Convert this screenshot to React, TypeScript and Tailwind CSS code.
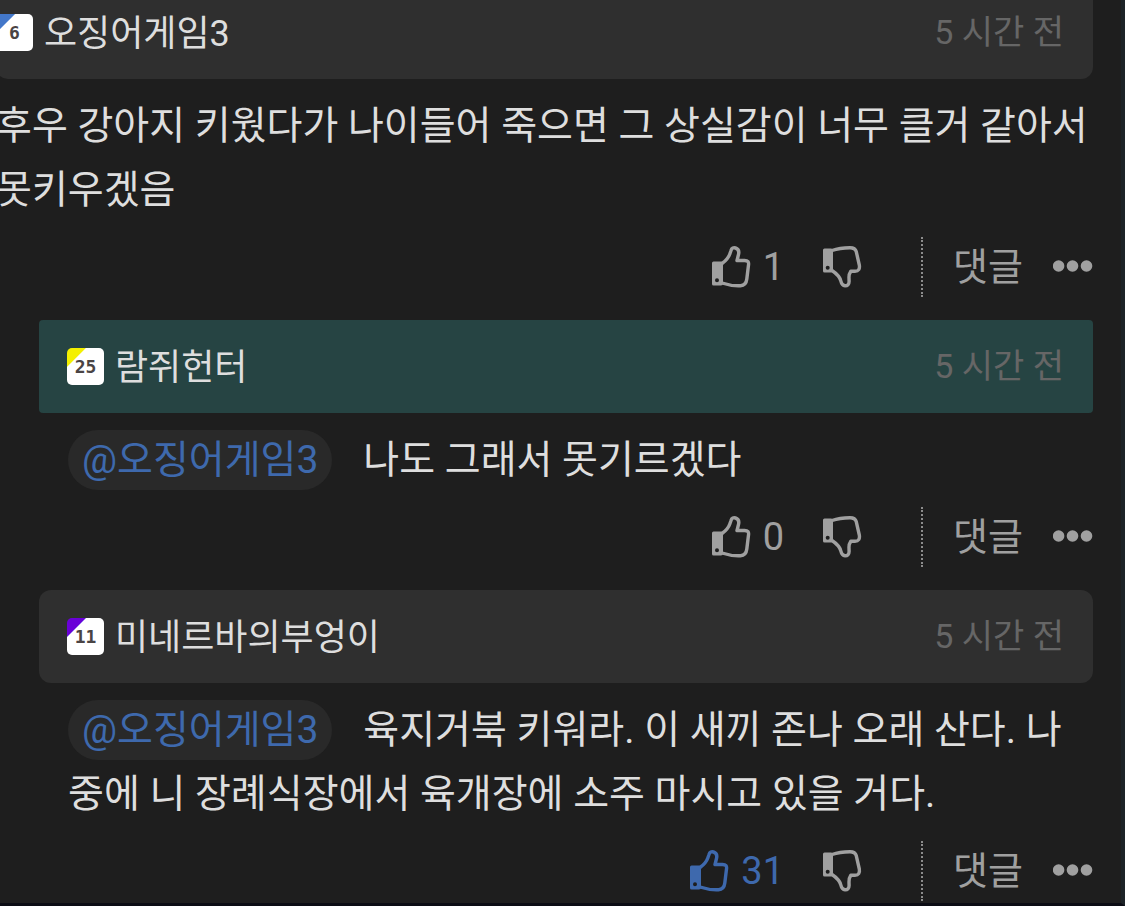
import type { ReactNode } from "react";
import clsx from "clsx";

function ThumbUp() {
  return (
    <svg className="h-[42px] w-10" viewBox="0 1 40 42" fill="none" aria-hidden="true">
      <path
        fill="currentColor"
        fillRule="evenodd"
        d="M2.500 16.500H10Q12 16.500 12 18.500V38.500Q12 40.500 10 40.500H2.500Q1 40.500 1 39V18Q1 16.500 2.500 16.500ZM6 33.200A2 2 0 1 0 6 37.200A2 2 0 1 0 6 33.200Z"
      />
      <path
        stroke="currentColor"
        strokeWidth="3.4"
        strokeLinejoin="round"
        d="M11 18.500C14.500 16 17.500 12.800 18.800 9L20 5.500C20.700 3 22.500 2.400 24.500 3C27.300 3.900 28.300 6.300 27.500 9.500L26 15.500H33.500C37 15.500 38 17 37.500 20L35.800 34C35.300 38.500 33.500 40.500 29.500 40.700C23.500 41 17 40 11 38"
      />
    </svg>
  );
}

function ThumbDown() {
  return (
    <svg className="h-[42px] w-10" viewBox="0 1 40 42" fill="none" aria-hidden="true">
      <path
        fill="currentColor"
        fillRule="evenodd"
        d="M2.500 3.500H9Q11 3.500 11 5.500V25.500Q11 27.500 9 27.500H2.500Q1 27.500 1 26V5Q1 3.500 2.500 3.500ZM5.700 20.700A2 2 0 1 0 5.700 24.700A2 2 0 1 0 5.700 20.700Z"
      />
      <path
        stroke="currentColor"
        strokeWidth="3.4"
        strokeLinejoin="round"
        d="M10 5.500C16 3.300 22 2.700 28 2.700C32 2.700 33.500 3.800 34.300 6.800L37.300 20C38 24 36.500 26.300 33 26.300H28.800C27.300 28.500 26.800 30 27 33L27.100 36.500C27.100 39.300 25.500 40.800 23 40.700C20.500 40.600 19.500 39 19 36.500C18 31.500 14.500 28.500 10 25.500"
      />
    </svg>
  );
}

function Dots() {
  return (
    <svg className="h-3.5 w-10" viewBox="0 0 40 14" fill="currentColor" aria-hidden="true">
      <circle cx="5.600" cy="6" r="5.800" />
      <circle cx="19.500" cy="6" r="5.800" />
      <circle cx="33.500" cy="6" r="5.800" />
    </svg>
  );
}

function LevelBadge({ level, corner }: { level: number; corner: string }) {
  return (
    <span
      className={clsx(
        "flex size-[37px] shrink-0 items-center justify-center rounded-[5px] bg-linear-135 from-[13px] to-white to-[14px] font-['DejaVu_Sans_Mono'] text-lg font-bold text-[#4a4444]",
        corner
      )}
    >
      {level}
    </span>
  );
}

function Mention({ name }: { name: string }) {
  return (
    <a
      href="#"
      className="mr-[31px] rounded-full bg-[#292929] px-3.5 py-[7px] text-[#3e69ad]"
    >
      {`@${name}`}
    </a>
  );
}

type CommentProps = {
  author: string;
  level: number;
  corner: string;
  likes: number;
  liked?: boolean;
  reply?: boolean;
  highlight?: boolean;
  children: ReactNode;
};

function Comment({
  author,
  level,
  corner,
  likes,
  liked,
  reply,
  highlight,
  children,
}: CommentProps) {
  return (
    <article className={reply ? "ml-[39px]" : "-ml-1"}>
      <header
        className={clsx(
          "flex h-[93px] items-center gap-[11px] pr-[29px]",
          reply && "pl-7",
          highlight ? "rounded-sm bg-[#264443]" : "rounded-xl bg-[#2f2f2f]"
        )}
      >
        <LevelBadge level={level} corner={corner} />
        <h2 className="pt-[3px] text-4xl text-[#dedede]">{author}</h2>
        <time className="ml-auto text-[34px] text-[#666666]">5 시간 전</time>
      </header>
      <p
        className={clsx(
          "pt-[15px] text-[39px] leading-[64px] text-[#dedede]",
          reply && "pl-[29px]"
        )}
      >
        {children}
      </p>
      <div className="mt-[15px] flex h-[60px] items-center justify-end text-[38px] text-[#a0a0a0]">
        <button
          aria-label="좋아요"
          className={clsx("flex items-center gap-3", liked && "text-[#3e69ad]")}
        >
          <ThumbUp />
          {likes}
        </button>
        <button aria-label="싫어요" className="ml-[38px]">
          <ThumbDown />
        </button>
        <div className="ml-[59px] h-full border-l-2 border-dotted border-[#8c8c8c]" />
        <button className="ml-[30px]">댓글</button>
        <button aria-label="더보기" className="ml-[30px]">
          <Dots />
        </button>
      </div>
    </article>
  );
}

export default function App() {
  return (
    <main className="min-h-screen overflow-hidden border-r-4 border-b-3 border-r-[#1d2327] border-b-[#0b0c14] bg-[#1e1e1e] pr-7 pb-0.5 font-['Roboto','Noto_Sans_CJK_KR',sans-serif]">
      <div className="-mt-3.5 flex flex-col gap-[23px]">
        <Comment author="오징어게임3" level={6} corner="from-[#4377c9]" likes={1}>
          후우 강아지 키웠다가 나이들어 죽으면 그 상실감이 너무 클거 같아서
          못키우겠음
        </Comment>
        <Comment
          author="람쥐헌터"
          level={25}
          corner="from-[#f4f000]"
          likes={0}
          reply
          highlight
        >
          <Mention name="오징어게임3" />
          나도 그래서 못기르겠다
        </Comment>
        <Comment
          author="미네르바의부엉이"
          level={11}
          corner="from-[#6a00d8]"
          likes={31}
          liked
          reply
        >
          <Mention name="오징어게임3" />
          육지거북 키워라. 이 새끼 존나 오래 산다. 나중에 니 장례식장에서
          육개장에 소주 마시고 있을 거다.
        </Comment>
      </div>
    </main>
  );
}
